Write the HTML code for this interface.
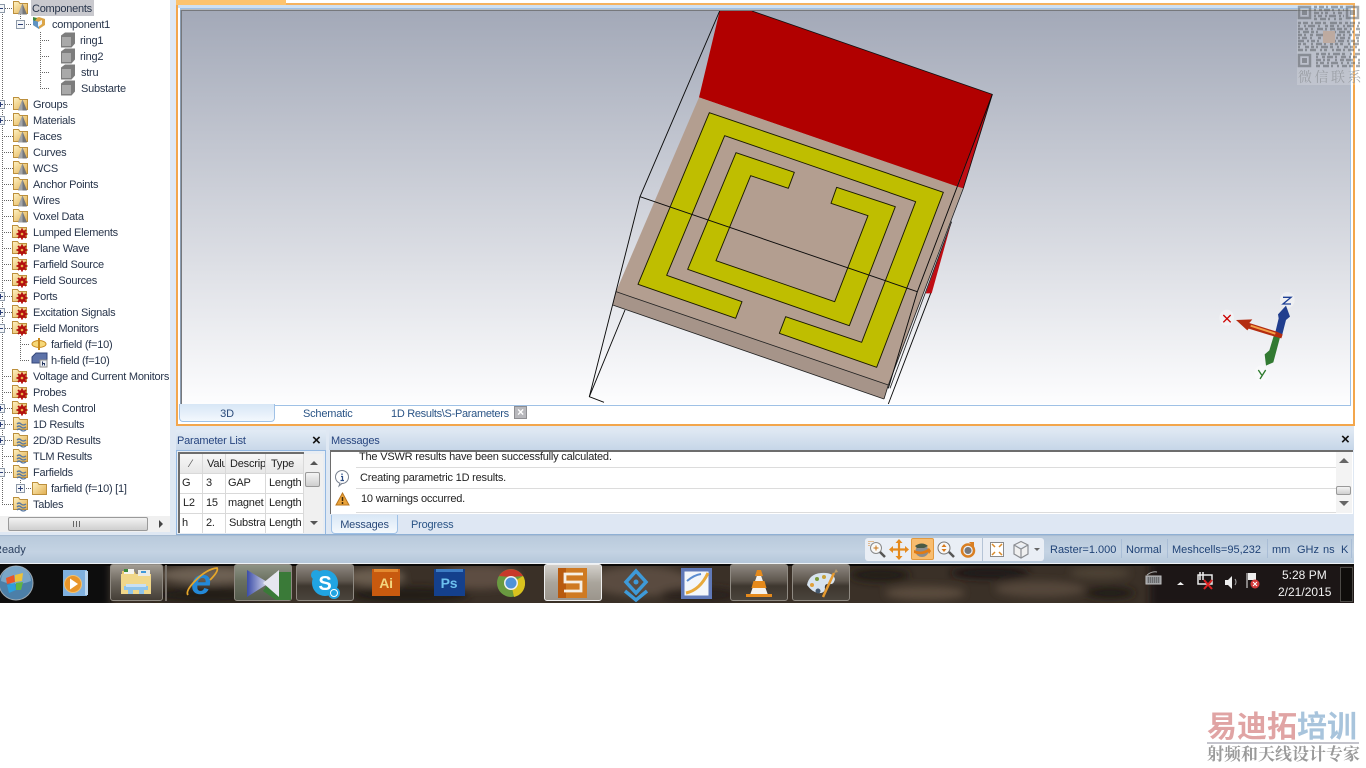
<!DOCTYPE html>
<html><head><meta charset="utf-8"><title>CST</title>
<style>
html,body{margin:0;padding:0;background:#fff}
body{width:1366px;height:768px;overflow:hidden;position:relative;font:11px "Liberation Sans",sans-serif;color:#1f2b3d;letter-spacing:-.2px}
div,span,svg{position:absolute;white-space:nowrap}
.t{height:16px;line-height:16px;margin-top:1px;letter-spacing:-.25px;color:#27344a}
.h{color:#27457f}
.c{line-height:19px;height:19px;color:#222;margin-top:1px}
.dv{background:#a9bdd6;width:1px;height:19px;top:539px}
.st{top:550px;transform:translateY(-50%);color:#1f4276;font-size:11px;letter-spacing:0}
.btn{top:564px;height:37px;border:1px solid #8f8a82;border-radius:3px;background:linear-gradient(#8d8780,#5e574e 45%,#3e372f 60%,#4a443c);box-sizing:border-box}
</style></head><body>
<svg width="0" height="0">
<defs>
<linearGradient id="fo" x1="0" y1="0" x2="1" y2="1"><stop offset="0" stop-color="#fff3c4"/><stop offset="1" stop-color="#e0ae50"/></linearGradient>
<linearGradient id="vsg" x1="0" y1="0" x2="1" y2="0"><stop offset="0" stop-color="#3a4ca8"/><stop offset="1" stop-color="#e6e6f2"/></linearGradient>
<g id="fold"><path d="M.5 1.500h5l1.500 2h7.500v10H.5z" fill="url(#fo)" stroke="#bc8f3c"/></g>
<g id="cone"><use href="#fold"/><path d="M9.500 3.500l4.500 11H5z" fill="#75777a"/><path d="M9.500 3.500l-4.500 11h4.500z" fill="#a3a5a8"/></g>
<g id="gear"><use href="#fold" x="-1"/><circle cx="9" cy="10" r="4" fill="#b3100f"/><path d="M9 4.500v11M3.500 10h11M5 6l8 8M13 6l-8 8" stroke="#b3100f" stroke-width="1.800"/><circle cx="9" cy="10" r="1.300" fill="#eab24a"/></g>
<g id="wave"><use href="#fold"/><path d="M4 8q2-2 4 0t5 0M4 11q2-2 4 0t5 0M4 14q2-2 4 0t5 0" fill="none" stroke="#5878a0" stroke-width="1.300"/></g>
<g id="cube"><path d="M1 3.500L5 .5h10v11l-3.500 4H1z" fill="#7d7d7d"/><path d="M2 5h9v9H2z" fill="#a9a9a9"/></g>
<g id="plus"><rect x=".5" y=".5" width="8" height="8" fill="#f4f6f8" stroke="#8d99a8"/><path d="M2 4.500h5M4.500 2v5" stroke="#2c3f78"/></g>
<g id="minus"><rect x=".5" y=".5" width="8" height="8" fill="#f4f6f8" stroke="#8d99a8"/><path d="M2 4.500h5" stroke="#2c3f78"/></g>
<filter id="bl" x="-30%" y="-60%" width="160%" height="220%"><feGaussianBlur stdDeviation="4"/></filter>
<linearGradient id="vp" x1="0" y1="0" x2="0" y2="1"><stop offset="0" stop-color="#a3a9b8"/><stop offset="1" stop-color="#fdfdfe"/></linearGradient>
</defs></svg>

<!-- app background -->
<div style="left:0;top:0;width:1354px;height:535px;background:#dfe8f3"></div>

<!-- Tree -->
<div style="left:0;top:0;width:170px;height:532px;background:#fff"></div>
<div style="left:31px;top:0;width:63px;height:16px;background:#c9c9ce"></div>
<svg style="left:0;top:0" width="172" height="516">
<g stroke="#666" stroke-dasharray="1 1" fill="none" shape-rendering="crispEdges">
<path d="M2.500 8V504M20.500 14V24M40.500 32V88M20.500 336V360M20.500 480V488"/>
<path d="M5 8.500H13M5 104.500H13M5 120.500H13M2 136.500H13M2 152.500H13M2 168.500H13M2 184.500H13M2 200.500H13M2 216.500H13M2 232.500H12M2 248.500H12M2 264.500H12M2 280.500H12M5 296.500H12M5 312.500H12M5 328.500H12M2 376.500H12M2 392.500H12M5 408.500H12M5 424.500H13M5 440.500H13M2 456.500H13M5 472.500H13M2 504.500H13"/>
<path d="M24 24.500H32M40 40.500H50M40 56.500H50M40 72.500H50M40 88.500H50M20 344.500H30M20 360.500H30M24 488.500H32"/>
</g>
<use href="#minus" x="-4" y="4"/><use href="#minus" x="16" y="20"/>
<use href="#plus" x="-4" y="100"/><use href="#plus" x="-4" y="116"/><use href="#plus" x="-4" y="292"/><use href="#plus" x="-4" y="308"/><use href="#minus" x="-4" y="324"/>
<use href="#plus" x="-4" y="404"/><use href="#plus" x="-4" y="420"/><use href="#plus" x="-4" y="436"/><use href="#minus" x="-4" y="468"/><use href="#plus" x="16" y="484"/>
<use href="#cone" x="13"/><use href="#cone" x="13" y="96"/><use href="#cone" x="13" y="112"/><use href="#cone" x="13" y="128"/><use href="#cone" x="13" y="144"/><use href="#cone" x="13" y="160"/><use href="#cone" x="13" y="176"/><use href="#cone" x="13" y="192"/><use href="#cone" x="13" y="208"/>
<use href="#gear" x="13" y="224"/><use href="#gear" x="13" y="240"/><use href="#gear" x="13" y="256"/><use href="#gear" x="13" y="272"/><use href="#gear" x="13" y="288"/><use href="#gear" x="13" y="304"/><use href="#gear" x="13" y="320"/><use href="#gear" x="13" y="368"/><use href="#gear" x="13" y="384"/><use href="#gear" x="13" y="400"/>
<use href="#wave" x="13" y="416"/><use href="#wave" x="13" y="432"/><use href="#wave" x="13" y="448"/><use href="#wave" x="13" y="464"/><use href="#wave" x="13" y="496"/>
<use href="#fold" x="32" y="481"/>
<use href="#cube" x="60" y="32"/><use href="#cube" x="60" y="48"/><use href="#cube" x="60" y="64"/><use href="#cube" x="60" y="80"/>
<!-- component icon -->
<path d="M33 19l6-2 6 2v6l-6 4-6-4z" fill="#dba548"/><path d="M33 20l6 2v7l-6-4z" fill="#5f93c2"/><path d="M33 17l4 1-2 3-2-1z" fill="#3f8a3e"/><path d="M38 22l4-2v4l-4 3z" fill="#eef3f8"/>
<!-- farfield -->
<ellipse cx="39" cy="344" rx="7" ry="3.500" fill="#f6d878" stroke="#c98a1e"/><path d="M39 338v12" stroke="#c98a1e" stroke-width="2"/>
<!-- h-field -->
<path d="M32 357l4-4h11v10H32z" fill="#5d72a8" stroke="#34477a"/><rect x="40" y="360" width="7" height="7" fill="#eef0f4" stroke="#8a8a8a"/><path d="M42.500 361.500v4M42.500 363.500h2v2" stroke="#23345e" fill="none"/>
</svg>
<div class="t" style="left:32px;top:0">Components</div>
<div class="t" style="left:52px;top:16px">component1</div>
<div class="t" style="left:80px;top:32px">ring1</div>
<div class="t" style="left:80px;top:48px">ring2</div>
<div class="t" style="left:81px;top:64px">stru</div>
<div class="t" style="left:81px;top:80px">Substarte</div>
<div class="t" style="left:33px;top:96px">Groups</div>
<div class="t" style="left:33px;top:112px">Materials</div>
<div class="t" style="left:33px;top:128px">Faces</div>
<div class="t" style="left:33px;top:144px">Curves</div>
<div class="t" style="left:33px;top:160px">WCS</div>
<div class="t" style="left:33px;top:176px">Anchor Points</div>
<div class="t" style="left:33px;top:192px">Wires</div>
<div class="t" style="left:33px;top:208px">Voxel Data</div>
<div class="t" style="left:33px;top:224px">Lumped Elements</div>
<div class="t" style="left:33px;top:240px">Plane Wave</div>
<div class="t" style="left:33px;top:256px">Farfield Source</div>
<div class="t" style="left:33px;top:272px">Field Sources</div>
<div class="t" style="left:33px;top:288px">Ports</div>
<div class="t" style="left:33px;top:304px">Excitation Signals</div>
<div class="t" style="left:33px;top:320px">Field Monitors</div>
<div class="t" style="left:51px;top:336px">farfield (f=10)</div>
<div class="t" style="left:51px;top:352px">h-field (f=10)</div>
<div class="t" style="left:33px;top:368px">Voltage and Current Monitors</div>
<div class="t" style="left:33px;top:384px">Probes</div>
<div class="t" style="left:33px;top:400px">Mesh Control</div>
<div class="t" style="left:33px;top:416px">1D Results</div>
<div class="t" style="left:33px;top:432px">2D/3D Results</div>
<div class="t" style="left:33px;top:448px">TLM Results</div>
<div class="t" style="left:33px;top:464px">Farfields</div>
<div class="t" style="left:51px;top:480px">farfield (f=10) [1]</div>
<div class="t" style="left:33px;top:496px">Tables</div>
<!-- tree hscroll -->
<div style="left:0;top:516px;width:170px;height:16px;background:#f0f0f0"></div>
<div style="left:8px;top:517px;width:140px;height:14px;border:1px solid #9a9a9a;box-sizing:border-box;border-radius:2px;background:linear-gradient(#f2f2f2,#cfcfcf)"></div>
<div style="left:73px;top:521px;width:7px;height:6px;background:repeating-linear-gradient(90deg,#666 0 1px,transparent 1px 3px)"></div>
<div style="left:159px;top:520px;width:0;height:0;border-left:4px solid #444;border-top:4px solid transparent;border-bottom:4px solid transparent"></div>

<!-- 3D frame -->
<div style="left:176px;top:0;width:1179px;height:426px;box-sizing:border-box;border:2px solid #f3a64c;border-top:0;background:#fff"></div>
<div style="left:176px;top:0;width:1179px;height:5px;background:#fff"></div>
<div style="left:176px;top:0;width:110px;height:5px;background:#fdc36e"></div>
<div style="left:286px;top:3px;width:1069px;height:2px;background:#f5b25f"></div>
<div style="left:178px;top:5px;width:1175px;height:3px;background:#cfe0f2"></div>
<svg style="left:180px;top:8px" width="1171" height="398"><rect x=".5" y=".5" width="1170" height="397" fill="#fff" stroke="#9fc1e6"/><path d="M1 2.500H1170M1.500 2V396" stroke="#76787c" stroke-width="2"/></svg>
<svg style="left:0;top:0" width="1366" height="405">
<rect x="182" y="11" width="1168" height="393" fill="url(#vp)"/>
<g transform="translate(580 0) scale(.33333)" stroke-linejoin="round">
<clipPath id="cp"><rect x="-1194" y="33" width="3504" height="1179"/></clipPath>
<g clip-path="url(#cp)">
<path d="M1115 665L1055 880 1037 880z" fill="#c00d14"/>
<path d="M1237 283L1150 565 1130 560z" fill="#c00d14"/>
<path d="M419 33H516L1237 283 1130 560 357 292z" fill="#b10000"/>
<path d="M516 33L1237 283 1150 565" fill="none" stroke="#111" stroke-width="2.500"/>
<path d="M357 292L1148 565 925 1155 108 875z" fill="#b39e90"/>
<path d="M108 875L925 1155 912 1197 98 915z" fill="#a69489"/>
<path d="M108 875L925 1155 M98 915L912 1197" fill="none" stroke="#222" stroke-width="2.500"/>
<path d="M1150 565L925 1155 912 1197M1115 665L930 1165" fill="none" stroke="#222" stroke-width="2.500"/>
<path d="M388 338L1090 577 890 1102 598 1000 617 950 845 1027 1007 605 434 407 260 826 486 905 467 955 174 853z" fill="#bfbe00" stroke="#1a1a00" stroke-width="2.800"/>
<path d="M468 458L643 517 625 565 512 527 408 782 764 905 864 647 753 610 770 562 946 620 808 977 323 808z" fill="#bfbe00" stroke="#1a1a00" stroke-width="2.800"/>
<g fill="none" stroke="#0b0b0b" stroke-width="2.800">
<path d="M419 33L180 590 28 1190 72 1207"/>
<path d="M180 590L1012 875"/>
<path d="M135 930L28 1190"/>
<path d="M1237 283L1012 875 925 1165M1052 880L925 1212"/>
</g>
</g></g>
<!-- triad -->
<g transform="translate(1210 285) scale(.33333)">
<ellipse cx="50" cy="98" rx="22" ry="24" fill="#fff" opacity=".35"/><ellipse cx="232" cy="45" rx="22" ry="24" fill="#fff" opacity=".35"/><ellipse cx="155" cy="265" rx="22" ry="24" fill="#fff" opacity=".3"/>
<path d="M212 150L190 232 168 242 164 208 178 196 192 150z" fill="#327a32"/>
<path d="M194 150L206 100 204 88 228 62 240 95 228 105 216 152z" fill="#213e8e"/>
<path d="M78 105L127 103 118 114 200 140 218 148 214 160 195 155 116 131 112 136z" fill="#b32c10"/>
<path d="M122 122L196 146" stroke="#f4a048" stroke-width="6"/>
<g fill="none" stroke-width="4"><path d="M40 90L62 112M62 90L40 112" stroke="#c00"/><path d="M219 37H243L219 57H243" stroke="#1d3f95"/><path d="M145 255L155 270M167 255L150 282" stroke="#2d7a2d"/></g>
</g>
</svg>
<!-- tab strip -->
<div style="left:179px;top:404px;width:96px;height:18px;box-sizing:border-box;border:1px solid #9fc1e6;border-top:0;border-radius:0 0 4px 4px;background:linear-gradient(#d7e6f6,#f3f8fd);text-align:center;line-height:20px;color:#2a4a7a;font-size:11px">3D</div>
<div style="left:303px;top:405px;line-height:18px;color:#2a5486;font-size:11px">Schematic</div>
<div style="left:391px;top:405px;line-height:18px;color:#2a5486;font-size:11px;letter-spacing:-.3px">1D Results\S-Parameters</div>
<div style="left:514px;top:406px;width:13px;height:13px;background:#b8b8bc;border:1px solid #8e8e92;box-sizing:border-box;color:#fff;font:bold 12px/11px 'Liberation Sans',sans-serif;text-align:center">×</div>

<!-- Parameter list -->
<div style="left:176px;top:430px;width:150px;height:20px;background:linear-gradient(#e2ebf5,#c9d8e9)"></div>
<div class="h" style="left:177px;top:435px;font-size:11px">Parameter List</div>
<div style="left:312px;top:433px;font:bold 15px/15px 'Liberation Sans',sans-serif;color:#111">×</div>
<div style="left:176px;top:450px;width:150px;height:85px;box-sizing:border-box;border:1px solid #93b8e2;background:#e8edf3"></div>
<div style="left:178px;top:452px;width:126px;height:81px;background:#fff;border-left:2px solid #6d6d6d;border-top:2px solid #6d6d6d;box-sizing:border-box"></div>
<div style="left:180px;top:454px;width:124px;height:20px;background:linear-gradient(#f7f7f7,#e6e6e6)"></div>
<svg style="left:178px;top:452px" width="127" height="81"><path d="M24.500 2V81M47.500 2V81M87.500 2V81M125.500 2V81M2 21.500H126M2 41.500H126M2 61.500H126" stroke="#d9d9d9" fill="none"/></svg>
<div class="c" style="left:190px;top:454px;color:#555">⁄</div>
<div class="c" style="left:207px;top:454px;width:18px;overflow:hidden">Valu</div>
<div class="c" style="left:230px;top:454px;width:35px;overflow:hidden">Descrip</div>
<div class="c" style="left:271px;top:454px">Type</div>
<div class="c" style="left:182px;top:473px">G</div><div class="c" style="left:206px;top:473px">3</div><div class="c" style="left:228px;top:473px">GAP</div><div class="c" style="left:269px;top:473px">Length</div>
<div class="c" style="left:183px;top:493px">L2</div><div class="c" style="left:206px;top:493px">15</div><div class="c" style="left:228px;top:493px;width:37px;overflow:hidden">magnet</div><div class="c" style="left:269px;top:493px">Length</div>
<div class="c" style="left:182px;top:513px">h</div><div class="c" style="left:206px;top:513px">2.</div><div class="c" style="left:229px;top:513px;width:36px;overflow:hidden">Substra</div><div class="c" style="left:269px;top:513px">Length</div>
<div style="left:304px;top:454px;width:19px;height:79px;background:#f0f0f0"></div>
<div style="left:310px;top:461px;border-left:4px solid transparent;border-right:4px solid transparent;border-bottom:4px solid #555"></div>
<div style="left:310px;top:521px;border-left:4px solid transparent;border-right:4px solid transparent;border-top:4px solid #555"></div>
<div style="left:305px;top:472px;width:15px;height:15px;box-sizing:border-box;border:1px solid #999;border-radius:2px;background:linear-gradient(#f4f4f4,#cfcfcf)"></div>

<!-- Messages -->
<div style="left:329px;top:430px;width:1025px;height:20px;background:linear-gradient(#dfe8f3,#c6d6e8)"></div>
<div class="h" style="left:331px;top:435px">Messages</div>
<div style="left:1341px;top:432px;font:bold 15px/15px 'Liberation Sans',sans-serif;color:#111">×</div>
<div style="left:330px;top:450px;width:1023px;height:64px;background:#fff;box-sizing:border-box;border-left:1px solid #6d6d6d;border-top:2px solid #6d6d6d"></div>
<div style="left:356px;top:467px;width:980px;height:1px;background:#dcdcdc"></div>
<div style="left:356px;top:488px;width:980px;height:1px;background:#dcdcdc"></div>
<div style="left:356px;top:512px;width:980px;height:1px;background:#dcdcdc"></div>
<div style="left:330px;top:452px;width:1006px;height:3px"></div>
<div style="left:359px;top:448px;line-height:19px;height:15px;overflow:visible;color:#222">The VSWR results have been successfully calculated.</div>
<div style="left:360px;top:469px;line-height:19px;color:#222">Creating parametric 1D results.</div>
<div style="left:361px;top:490px;line-height:19px;color:#222">10 warnings occurred.</div>
<div style="left:330px;top:450px;width:1006px;height:2px;background:#6d6d6d"></div>
<svg style="left:334px;top:470px" width="18" height="36">
<circle cx="8" cy="7" r="6.500" fill="#fff" stroke="#78808e"/><path d="M8 3.500v1.500M7 6.500h1.500V10M6.500 10.500H10" stroke="#2c4d86" fill="none" stroke-width="1.200"/><path d="M6 13l-1 3 3-2.500" fill="#fff" stroke="#78808e"/>
<path d="M8.500 23L15 35H2z" fill="#e9a23a" stroke="#b9751c"/><path d="M8.500 27v4M8.500 32v2" stroke="#442a05" stroke-width="1.500"/>
</svg>
<div style="left:1336px;top:452px;width:16px;height:61px;background:#f3f3f3"></div>
<div style="left:1339px;top:458px;border-left:5px solid transparent;border-right:5px solid transparent;border-bottom:5px solid #666"></div>
<div style="left:1339px;top:501px;border-left:5px solid transparent;border-right:5px solid transparent;border-top:5px solid #666"></div>
<div style="left:1336px;top:486px;width:15px;height:9px;box-sizing:border-box;border:1px solid #999;border-radius:2px;background:linear-gradient(#f4f4f4,#cfcfcf)"></div>
<div style="left:329px;top:514px;width:1025px;height:21px;background:#deE7f3"></div>
<div style="left:331px;top:515px;width:67px;height:19px;box-sizing:border-box;border:1px solid #9fc1e6;border-top:0;border-radius:0 0 4px 4px;background:linear-gradient(#d9e7f6,#f5f9fd);text-align:center;line-height:20px;color:#2a4a7a">Messages</div>
<div style="left:411px;top:516px;line-height:18px;color:#2a5486">Progress</div>
<div style="left:176px;top:534px;width:1178px;height:1px;background:#8fb0d4"></div>

<!-- status bar -->
<div style="left:0;top:535px;width:1354px;height:28px;background:linear-gradient(#9fb5cd 0,#b9cadc 5%,#c4d3e3 60%,#b5c7da)"></div>
<div class="st" style="left:-6px;color:#2b4060">Ready</div>
<div style="left:865px;top:538px;width:179px;height:23px;background:#e9eef5;border-radius:3px"></div>
<div style="left:911px;top:538px;width:23px;height:22px;background:#f8bd6f;border:1px solid #e39a3f;box-sizing:border-box;border-radius:2px"></div>
<div style="left:982px;top:538px;width:1px;height:23px;background:#b5c4d6"></div>
<svg style="left:865px;top:538px" width="180" height="23">
<circle cx="11" cy="10" r="5.500" fill="#f8f8f8" stroke="#8a8a8a"/><path d="M15 14l5 5" stroke="#555" stroke-width="2.500"/><path d="M8.500 10h5M11 7.500v5" stroke="#c77415"/><path d="M4 8V3.500h5" fill="none" stroke="#d9862a" stroke-dasharray="1 1"/>
<path d="M34 4v15M26.500 11.500h15" stroke="#e58a1d" stroke-width="2.200"/><path d="M34 1l-3.500 4h7zM34 22l-3.500-4h7zM24 11.500l4-3.500v7zM44 11.500l-4-3.500v7z" fill="#e58a1d"/>
<ellipse cx="57" cy="13" rx="6.500" ry="6" fill="#8d8d8d"/><path d="M50 8q7-5 13 0l-4 2H52z" fill="#4a5a44"/><path d="M49 12q8 4 15-2l2 3-2 3-1-2q-7 4-14 1z" fill="#df7b16"/>
<circle cx="79" cy="10" r="6" fill="#f8f8f8" stroke="#777"/><path d="M84 14l5 5" stroke="#555" stroke-width="2.500"/><path d="M79 6l-2.500 3h5zM79 14l-2.500-3h5z" fill="#d77a1c"/>
<circle cx="103" cy="12.500" r="6" fill="none" stroke="#d97f22" stroke-width="2.500"/><circle cx="103" cy="12.500" r="3.500" fill="#77777a"/><path d="M104 4h5v5" fill="#d97f22"/>
<rect x="125.500" y="4.500" width="13" height="14" fill="#fff" stroke="#8a8a8a"/><path d="M127 6l3 3M137 6l-3 3M127 17l3-3M137 17l-3-3" stroke="#d98a2a" stroke-width="1.500"/>
<path d="M149 7l7-3.500 7 3.500v9l-7 4-7-4zM149 7l7 4 7-4M156 11v9" fill="#f0f0f0" stroke="#8a8d92" stroke-width="1.200"/>
<path d="M169 10h6l-3 3z" fill="#666"/>
</svg>
<div class="st" style="left:1050px">Raster=1.000</div><div class="dv" style="left:1121px"></div>
<div class="st" style="left:1126px">Normal</div><div class="dv" style="left:1167px"></div>
<div class="st" style="left:1172px">Meshcells=95,232</div><div class="dv" style="left:1267px"></div>
<div class="st" style="left:1272px">mm</div><div class="st" style="left:1297px">GHz</div><div class="st" style="left:1323px">ns</div><div class="st" style="left:1341px">K</div><div class="dv" style="left:1351px"></div>

<!-- taskbar -->
<div style="left:0;top:563px;width:1354px;height:40px;background:#3a3027;overflow:hidden">
<svg style="left:0;top:0" width="1354" height="40"><g filter="url(#bl)">
<rect x="-10" y="-5" width="120" height="50" fill="#0d0a08"/>
<ellipse cx="210" cy="12" rx="50" ry="9" fill="#6d6053"/><ellipse cx="210" cy="32" rx="60" ry="8" fill="#241d18"/><ellipse cx="375" cy="14" rx="30" ry="9" fill="#6a5d50"/><ellipse cx="410" cy="32" rx="60" ry="8" fill="#241d18"/><ellipse cx="480" cy="14" rx="40" ry="12" fill="#5d4e42"/><ellipse cx="640" cy="18" rx="50" ry="15" fill="#5a4b40"/><ellipse cx="700" cy="32" rx="40" ry="8" fill="#2a221c"/>
<ellipse cx="880" cy="12" rx="30" ry="7" fill="#231c17"/><ellipse cx="925" cy="30" rx="40" ry="7" fill="#5a4c3e"/><ellipse cx="990" cy="10" rx="40" ry="6" fill="#1f1915"/><ellipse cx="1040" cy="26" rx="45" ry="8" fill="#54473a"/><ellipse cx="1100" cy="10" rx="30" ry="6" fill="#4e4236"/><ellipse cx="1110" cy="30" rx="25" ry="6" fill="#231c17"/>
<rect x="1150" y="-5" width="210" height="50" fill="#1b1713"/></g></svg>
<div style="left:0;top:0;width:100%;height:1px;background:#eef2f6"></div>
<div style="left:0;top:1px;width:100%;height:2px;background:#0c0a08"></div>
</div>
<div class="btn" style="left:110px;width:53px;background:linear-gradient(#a29c93,#6b655c 50%,#443e36)"></div>
<div style="left:165px;top:565px;width:2px;height:36px;border:1px solid #77716a;box-sizing:border-box"></div>
<div class="btn" style="left:234px;width:58px;background:linear-gradient(#8d9284,#6a7060 45%,#545a4c)"></div>
<div class="btn" style="left:296px;width:58px"></div>
<div class="btn" style="left:544px;width:58px;background:linear-gradient(#d3d0cb,#aaa59c 50%,#9b958c);border-color:#eee"></div>
<div class="btn" style="left:730px;width:58px"></div>
<div class="btn" style="left:792px;width:58px"></div>
<svg style="left:0;top:563px" width="1354" height="40">
<!-- orb -->
<circle cx="16" cy="20" r="17" fill="#4c7fa8" stroke="#9ea8b0"/><path d="M1 18a15 15 0 0 1 30 0q-15 6-30 0" fill="#9ac0dc" opacity=".6"/><path d="M6 15l8-3 1 7-8 2z" fill="#e8562a"/><path d="M15 12l8-2-1 8-7 1z" fill="#ecc23a"/><path d="M7 22l8-2 1 7-7 3z" fill="#2d9fdb"/><path d="M16 20l7-1-2 8-5 0z" fill="#5fb544"/>
<!-- media player -->
<path d="M63 7h24v26H63z" fill="#7fb0de"/><path d="M85 8h3v24h-3z" fill="#bcd6ee"/><circle cx="73" cy="21" r="8.500" fill="#e8952a" stroke="#f0c070"/><path d="M70 15.500l8 5.500-8 5.500z" fill="#fff"/>
<!-- explorer -->
<path d="M121 11h30v20h-30z" fill="#f0d78a"/><path d="M122 8h12l2 3h-14z" fill="#e8c870"/><path d="M124 6h10v5h-10z" fill="#f4f4f0"/><path d="M124 6h4v3h-4z" fill="#3a8a3a"/><path d="M138 7h12v6h-12z" fill="#e9e9e4"/><path d="M141 8h5v2h-5z" fill="#4098d8"/><path d="M124 23h24v4h-4v4h-5v-4h-6v4h-5v-4h-4z" fill="#8ec4ec"/><path d="M126 21h20v3h-20z" fill="#c8e0f4"/>
<!-- IE -->
<text x="201" y="31" font-family="Liberation Sans,sans-serif" font-weight="bold" font-style="italic" font-size="36" fill="#2489d8" text-anchor="middle">e</text><path d="M188 32q-3-4 8-15t21-12q2 3-7 12" fill="none" stroke="#e7a72a" stroke-width="1.800"/>
<!-- VS-like -->
<path d="M276 9h15v28h-15l-13-9z" fill="#3a7a38"/>
<path d="M247 7L269 20 247 34z" fill="url(#vsg)"/><path d="M279 7L263 20 279 34z" fill="#e6e6f0"/>
<!-- Skype -->
<circle cx="325" cy="20" r="13" fill="#21a4e2"/><circle cx="316" cy="12" r="5" fill="#21a4e2"/><circle cx="334" cy="30" r="6" fill="#21a4e2"/>
<text x="325" y="27" font-family="Liberation Sans,sans-serif" font-weight="bold" font-size="20" fill="#fff" text-anchor="middle">S</text><circle cx="334" cy="30" r="3.500" fill="none" stroke="#fff"/>
<!-- Ai -->
<rect x="372" y="6" width="28" height="27" fill="#c85a0f"/><rect x="374" y="6" width="24" height="3" fill="#e48a30"/><text x="386" y="25" font-family="Liberation Sans,sans-serif" font-weight="bold" font-size="14" fill="#f3d67f" text-anchor="middle">Ai</text>
<!-- Ps -->
<rect x="434" y="6" width="31" height="27" fill="#14408c"/><rect x="436" y="6" width="27" height="3" fill="#3c7cc4"/><text x="449" y="25" font-family="Liberation Sans,sans-serif" font-weight="bold" font-size="14" fill="#6cc0ee" text-anchor="middle">Ps</text>
<!-- Chrome -->
<circle cx="511" cy="20" r="14" fill="#6a9a40"/><path d="M499 13a14 14 0 0 1 24 0l-12 1z" fill="#c9392a"/><path d="M523 13a14 14 0 0 1-9 21l-3-14z" fill="#d9c21e"/><circle cx="511" cy="20" r="7" fill="#f0f0f0"/><circle cx="511" cy="20" r="5.500" fill="#4f92d8"/>
<!-- S app -->
<rect x="558" y="5" width="29" height="30" fill="#cf7a22"/><rect x="558" y="5" width="8" height="30" fill="#b85a0e"/><path d="M583 11h-18v8h16v9h-17" fill="none" stroke="#f6efe4" stroke-width="2.800"/>
<!-- diamond -->
<path d="M636 8l10 11-10 11-10-11z" fill="none" stroke="#3e9ad8" stroke-width="3.500"/><path d="M625 28l11 9 11-9" fill="none" stroke="#3e9ad8" stroke-width="3.500"/><circle cx="636" cy="19" r="2.500" fill="#3e9ad8"/>
<!-- curve app -->
<rect x="681" y="5" width="31" height="31" fill="#6079b8"/><rect x="684.500" y="8.500" width="24" height="24" fill="#f3f6fa"/><path d="M686 30q14-3 22-20" fill="none" stroke="#e8a93a" stroke-width="3"/><path d="M687 18q7-6 14-7" fill="none" stroke="#5a8cd0" stroke-width="2"/>
<!-- VLC -->
<path d="M759 7l9 25h-18z" fill="#f4f1ec"/><path d="M757 7h4l2 6h-8zM753.500 18h11l2 7h-15z" fill="#e58a1c"/><path d="M746 31h26v3h-26z" fill="#e58a1c"/>
<!-- palette -->
<path d="M807 22q2-11 14-12t14 6q-1 6-6 5t-4 5q-1 5-7 4t-11-8z" fill="#d7e3ee"/><circle cx="812" cy="22" r="2" fill="#e0a03a"/><circle cx="817" cy="16" r="2" fill="#7a9a3a"/><circle cx="824" cy="14" r="2" fill="#c8a23a"/><circle cx="818" cy="28" r="2.500" fill="#44586e"/><path d="M823 34l11-24" stroke="#e59a30" stroke-width="2.500"/><path d="M834 10l2-4 2 3z" fill="#b99a6a"/>
<!-- tray -->
<rect x="1146" y="13" width="15" height="8" fill="#8f9296" stroke="#c0c0c0"/><path d="M1148 15h11M1148 17h11M1148 19h11" stroke="#444" stroke-dasharray="1 1"/><path d="M1147 12q5-4 10-3" fill="none" stroke="#aaa"/>
<path d="M1177 22l3.500-3 3.500 3z" fill="#f0f0f0"/>
<path d="M1198 12h14v9h-14z" fill="none" stroke="#e8e8e8" stroke-width="1.500"/><path d="M1200 9v8M1203 9v8" stroke="#eee" stroke-width="1.500"/><path d="M1204 17l8 9M1212 17l-8 9" stroke="#d22" stroke-width="2"/>
<path d="M1225 17h3l4-4v13l-4-4h-3z" fill="#eee"/><path d="M1235 16q2 3 0 6" stroke="#aaa" fill="none"/>
<path d="M1247 10v15" stroke="#eee"/><path d="M1248 10h8v7h-8z" fill="#eee"/><circle cx="1255" cy="21" r="4.500" fill="#d43a3a"/><path d="M1253 19l4 4M1257 19l-4 4" stroke="#fff"/>
<rect x="1340.500" y="4.500" width="12" height="34" fill="#0f0d0b" stroke="#4c4a46"/>
</svg>
<div style="left:1282px;top:568px;color:#f2f2f2;font-size:12px;line-height:15px;letter-spacing:0">5:28 PM</div>
<div style="left:1278px;top:585px;color:#f2f2f2;font-size:12px;line-height:15px;letter-spacing:0">2/21/2015</div>

<!-- QR watermark -->
<div style="left:1297px;top:5px;width:64px;height:80px;background:rgba(255,255,255,.18)"></div>
<svg style="left:1297px;top:5px" width="64" height="64" opacity=".5">
<g stroke="#55595e" stroke-width="2.500" fill="none">
<path stroke-dasharray="3 2 5 2 2 3 7 2 3 5 2 3" d="M17 2H47"/><path stroke-dasharray="2 3 3 2 6 2 2 4" d="M17 5H47"/><path stroke-dasharray="5 2 2 2 3 5 2 3 4 2" d="M17 8H47"/><path stroke-dasharray="2 2 4 3 2 2 7 3" d="M17 11H47"/><path stroke-dasharray="3 3 6 2 2 4 2 3" d="M17 14H47"/>
<path stroke-dasharray="3 2 5 3 2 2 6 2 3 4 7 2 3 3" d="M1 18H63"/><path stroke-dasharray="2 4 2 2 7 3 2 5 3 2 4 3" d="M1 21H63"/><path stroke-dasharray="5 2 3 3 2 4 6 2 2 3 5 2" d="M1 24H63"/><path stroke-dasharray="2 3 6 2 3 2 2 5 4 3 2 2" d="M1 27H63"/><path stroke-dasharray="4 2 2 4 3 3 7 2 2 2 5 3" d="M1 30H63"/><path stroke-dasharray="2 2 5 3 2 6 3 2 4 4 2 3" d="M1 33H63"/><path stroke-dasharray="6 3 2 2 4 2 2 5 3 3 6 2" d="M1 36H63"/><path stroke-dasharray="3 2 3 5 2 3 6 2 2 4 3 2" d="M1 39H63"/><path stroke-dasharray="2 5 4 2 3 2 2 3 7 2 3 4" d="M1 42H63"/><path stroke-dasharray="5 2 2 3 6 4 2 2 3 5 2 2" d="M1 45H63"/>
<path stroke-dasharray="3 2 5 2 2 3 7 2 3 5 2 3 6" d="M19 49H63"/><path stroke-dasharray="2 4 3 2 6 2 2 4 5 3 2" d="M19 52H63"/><path stroke-dasharray="5 2 2 2 3 5 2 3 4 2 7" d="M19 55H63"/><path stroke-dasharray="2 2 4 3 2 2 7 3 2 4" d="M19 58H63"/><path stroke-dasharray="4 3 6 2 2 4 2 3 5 2" d="M19 61H63"/>
<rect x="2" y="2" width="11" height="11"/><rect x="50" y="2" width="11" height="11"/><rect x="2" y="50" width="11" height="11"/>
</g><g fill="#55595e"><rect x="5" y="5" width="5" height="5"/><rect x="53" y="5" width="5" height="5"/><rect x="5" y="53" width="5" height="5"/></g>
<rect x="26" y="26" width="12" height="12" fill="#c49a7a"/></svg>
<div style="left:1298px;top:69px;color:#8f9398;font:14px/16px 'Noto Serif CJK SC','Noto Sans CJK SC',sans-serif;letter-spacing:2.500px;opacity:.75">微信联系</div>

<!-- bottom watermark -->
<div style="left:1207px;top:707px;font:bold 30px/34px 'Noto Sans CJK SC',sans-serif;color:#e0a4a4;letter-spacing:0">易迪拓</div>
<div style="left:1297px;top:707px;font:bold 30px/34px 'Noto Sans CJK SC',sans-serif;color:#a8c4dc;letter-spacing:0">培训</div>
<div style="left:1207px;top:742px;width:152px;height:2px;background:#c4c4cc"></div>
<div style="left:1207px;top:744px;font:bold 17px/18px 'Noto Serif CJK SC',serif;color:#9a9a9a;letter-spacing:0">射频和天线设计专家</div>
</body></html>
